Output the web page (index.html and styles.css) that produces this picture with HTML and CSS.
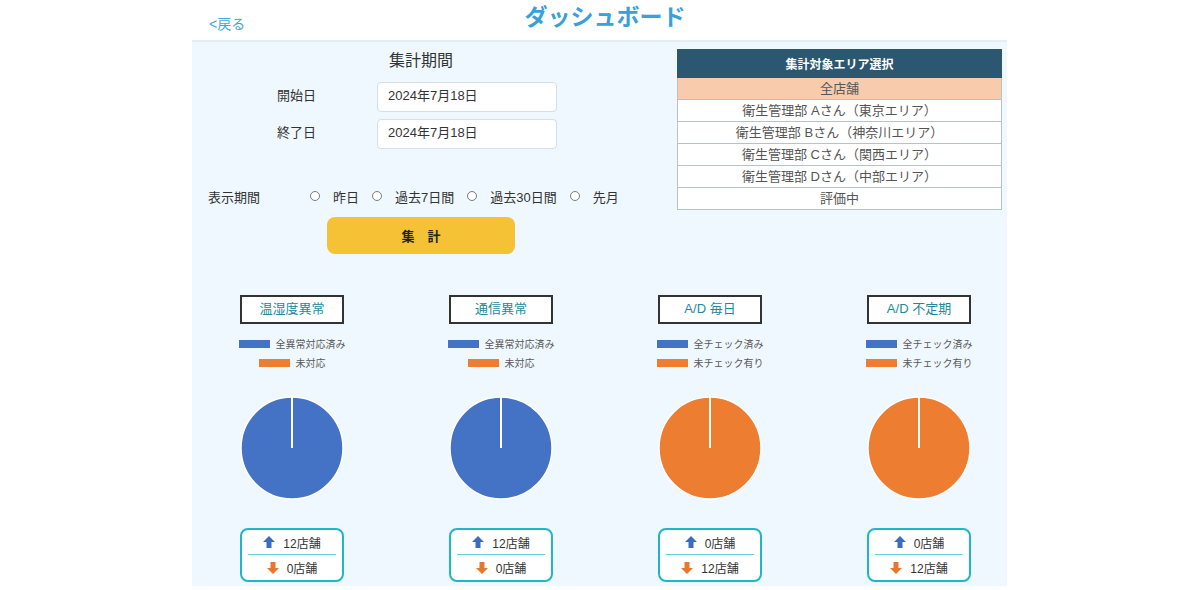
FILE: index.html
```html
<!DOCTYPE html>
<html lang="ja">
<head>
<meta charset="utf-8">
<title>ダッシュボード</title>
<link rel="stylesheet" href="styles.css">
</head>
<body>
<div class="page">
  <header class="header">
    <a class="back" href="#">&lt;戻る</a>
    <h1 class="title">ダッシュボード</h1>
    <span></span>
  </header>
  <main class="panel">
    <section class="top">
      <div class="period">
        <h2 class="period-title">集計期間</h2>
        <div class="date-row"><span class="date-label">開始日</span><div class="date-input">2024年7月18日</div></div>
        <div class="date-row second"><span class="date-label">終了日</span><div class="date-input">2024年7月18日</div></div>
        <div class="range-row">
          <span class="range-label">表示期間</span>
          <div class="radios">
            <span class="radio"></span><span class="radio-text">昨日</span>
            <span class="radio"></span><span class="radio-text">過去7日間</span>
            <span class="radio"></span><span class="radio-text">過去30日間</span>
            <span class="radio"></span><span class="radio-text">先月</span>
          </div>
        </div>
        <button class="sum-btn">集　計</button>
      </div>
      <table class="area">
        <tr><th>集計対象エリア選択</th></tr>
        <tr><td class="selected">全店舗</td></tr>
        <tr><td>衛生管理部 Aさん（東京エリア）</td></tr>
        <tr><td>衛生管理部 Bさん（神奈川エリア）</td></tr>
        <tr><td>衛生管理部 Cさん（関西エリア）</td></tr>
        <tr><td>衛生管理部 Dさん（中部エリア）</td></tr>
        <tr><td>評価中</td></tr>
      </table>
    </section>

    <section class="charts">
      <div class="chart">
        <div class="chart-title">温湿度異常</div>
        <div class="legend">
          <div class="legend-row"><span class="bar blue"></span><span>全異常対応済み</span></div>
          <div class="legend-row"><span class="bar orange"></span><span>未対応</span></div>
        </div>
        <svg class="pie" width="104" height="104" viewBox="0 0 104 104"><circle cx="52" cy="52" r="51" fill="#4472c4" stroke="#fff" stroke-width="1.5"/><line x1="52" y1="1" x2="52" y2="52" stroke="#fff" stroke-width="2"/></svg>
        <div class="count">
          <div class="count-row"><svg width="12" height="12" viewBox="0 0 12 12"><polygon points="6,0 12,6 8.5,6 8.5,12 3.5,12 3.5,6 0,6" fill="#3a6cc2"/></svg><span>12店舗</span></div>
          <div class="divider"></div>
          <div class="count-row"><svg width="12" height="12" viewBox="0 0 12 12"><polygon points="6,12 12,6 8.5,6 8.5,0 3.5,0 3.5,6 0,6" fill="#e8772e"/></svg><span>0店舗</span></div>
        </div>
      </div>
      <div class="chart">
        <div class="chart-title">通信異常</div>
        <div class="legend">
          <div class="legend-row"><span class="bar blue"></span><span>全異常対応済み</span></div>
          <div class="legend-row"><span class="bar orange"></span><span>未対応</span></div>
        </div>
        <svg class="pie" width="104" height="104" viewBox="0 0 104 104"><circle cx="52" cy="52" r="51" fill="#4472c4" stroke="#fff" stroke-width="1.5"/><line x1="52" y1="1" x2="52" y2="52" stroke="#fff" stroke-width="2"/></svg>
        <div class="count">
          <div class="count-row"><svg width="12" height="12" viewBox="0 0 12 12"><polygon points="6,0 12,6 8.5,6 8.5,12 3.5,12 3.5,6 0,6" fill="#3a6cc2"/></svg><span>12店舗</span></div>
          <div class="divider"></div>
          <div class="count-row"><svg width="12" height="12" viewBox="0 0 12 12"><polygon points="6,12 12,6 8.5,6 8.5,0 3.5,0 3.5,6 0,6" fill="#e8772e"/></svg><span>0店舗</span></div>
        </div>
      </div>
      <div class="chart">
        <div class="chart-title">A/D 毎日</div>
        <div class="legend">
          <div class="legend-row"><span class="bar blue"></span><span>全チェック済み</span></div>
          <div class="legend-row"><span class="bar orange"></span><span>未チェック有り</span></div>
        </div>
        <svg class="pie" width="104" height="104" viewBox="0 0 104 104"><circle cx="52" cy="52" r="51" fill="#ed7d31" stroke="#fff" stroke-width="1.5"/><line x1="52" y1="1" x2="52" y2="52" stroke="#fff" stroke-width="2"/></svg>
        <div class="count">
          <div class="count-row"><svg width="12" height="12" viewBox="0 0 12 12"><polygon points="6,0 12,6 8.5,6 8.5,12 3.5,12 3.5,6 0,6" fill="#3a6cc2"/></svg><span>0店舗</span></div>
          <div class="divider"></div>
          <div class="count-row"><svg width="12" height="12" viewBox="0 0 12 12"><polygon points="6,12 12,6 8.5,6 8.5,0 3.5,0 3.5,6 0,6" fill="#e8772e"/></svg><span>12店舗</span></div>
        </div>
      </div>
      <div class="chart">
        <div class="chart-title">A/D 不定期</div>
        <div class="legend">
          <div class="legend-row"><span class="bar blue"></span><span>全チェック済み</span></div>
          <div class="legend-row"><span class="bar orange"></span><span>未チェック有り</span></div>
        </div>
        <svg class="pie" width="104" height="104" viewBox="0 0 104 104"><circle cx="52" cy="52" r="51" fill="#ed7d31" stroke="#fff" stroke-width="1.5"/><line x1="52" y1="1" x2="52" y2="52" stroke="#fff" stroke-width="2"/></svg>
        <div class="count">
          <div class="count-row"><svg width="12" height="12" viewBox="0 0 12 12"><polygon points="6,0 12,6 8.5,6 8.5,12 3.5,12 3.5,6 0,6" fill="#3a6cc2"/></svg><span>0店舗</span></div>
          <div class="divider"></div>
          <div class="count-row"><svg width="12" height="12" viewBox="0 0 12 12"><polygon points="6,12 12,6 8.5,6 8.5,0 3.5,0 3.5,6 0,6" fill="#e8772e"/></svg><span>12店舗</span></div>
        </div>
      </div>
    </section>
  </main>
</div>
</body>
</html>
```

FILE: styles.css
```css
* { box-sizing: border-box; }
html, body {
  margin: 0;
  padding: 0;
  background: #ffffff;
  font-family: "Liberation Sans", "Noto Sans CJK JP", sans-serif;
  color: #333333;
}
.page {
  width: 815px;
  margin-left: 192px;
}
.header {
  height: 40px;
  display: grid;
  grid-template-columns: 1fr auto 1fr;
}
.back {
  padding-left: 17px;
  padding-top: 15px;
  font-size: 14px;
  line-height: 18px;
  color: #47a5dc;
  text-decoration: none;
}
.title {
  margin: 0;
  padding-left: 11px;
  padding-top: 3px;
  font-size: 23px;
  line-height: 28px;
  font-weight: bold;
  color: #3b9fd8;
}
.panel {
  background: #eff8fe;
  border-top: 2px solid #e2edf4;
  padding: 7px 0 4px 0;
}
.top {
  display: flex;
  align-items: flex-start;
  padding-left: 16px;
}
.period {
  width: 426px;
  flex-shrink: 0;
  display: flex;
  flex-direction: column;
}
.period-title {
  margin: 0;
  text-align: center;
  font-size: 16px;
  font-weight: normal;
  line-height: 24px;
  color: #333;
}
.date-row {
  display: flex;
  align-items: center;
  margin-top: 9px;
  padding-left: 69px;
  height: 30px;
}
.date-row.second { margin-top: 7px; }
.date-label {
  width: 100px;
  font-size: 13px;
  line-height: 16px;
  padding-bottom: 3px;
  color: #333;
}
.date-input {
  width: 180px;
  height: 30px;
  background: #fff;
  border: 1px solid #d3e0e8;
  border-radius: 4px;
  padding-left: 10px;
  font-size: 13px;
  line-height: 26px;
  color: #333;
}
.range-row {
  display: flex;
  align-items: center;
  margin-top: 37px;
  height: 20px;
  font-size: 13px;
  white-space: nowrap;
}
.range-label {
  width: 102px;
  flex-shrink: 0;
}
.radios {
  display: flex;
  align-items: center;
  flex-shrink: 0;
}
.radio {
  width: 10px;
  height: 10px;
  flex-shrink: 0;
  border: 1px solid #7a7a7a;
  border-radius: 50%;
  background: #fff;
}
.radio-text {
  flex-shrink: 0;
  padding-left: 13px;
  padding-right: 13px;
}
.sum-btn {
  align-self: center;
  margin-top: 11px;
  width: 188px;
  height: 37px;
  border: none;
  border-radius: 8px;
  background: #f5c236;
  font-family: inherit;
  font-size: 13px;
  font-weight: bold;
  color: #222;
}
.area {
  margin-left: 43px;
  width: 325px;
  border-collapse: collapse;
  background: #fff;
}
.area th {
  height: 28px;
  padding: 0;
  background: #2c5770;
  color: #fff;
  font-size: 12px;
  font-weight: bold;
  border: 1px solid #2c5770;
}
.area td {
  height: 22px;
  padding: 0;
  text-align: center;
  font-size: 13px;
  line-height: 20px;
  color: #555;
  border: 1px solid #b7c3cb;
}
.area td.selected { background: #f8cbad; }
.charts {
  margin-top: 41px;
  margin-left: 12px;
  display: grid;
  grid-template-columns: repeat(4, 176px);
  column-gap: 33px;
}
.chart {
  display: flex;
  flex-direction: column;
  align-items: center;
}
.chart-title {
  width: 104px;
  height: 29px;
  border: 2px solid #333;
  background: #fff;
  text-align: center;
  font-size: 13px;
  line-height: 24px;
  color: #23899a;
}
.legend {
  margin-top: 10px;
  display: flex;
  flex-direction: column;
  align-items: center;
}
.legend-row {
  height: 19px;
  display: flex;
  align-items: center;
  font-size: 10px;
  color: #595959;
}
.bar {
  width: 31px;
  height: 8px;
  margin-right: 6px;
}
.bar.blue { background: #4472c4; }
.bar.orange { background: #ed7d31; }
.pie {
  display: block;
  margin-top: 24px;
}
.count {
  margin-top: 28px;
  width: 104px;
  height: 54px;
  border: 2px solid #1fb6c7;
  border-radius: 8px;
  background: #fff;
}
.count-row {
  height: 24px;
  display: flex;
  align-items: center;
  justify-content: center;
  gap: 8px;
  font-size: 12px;
  color: #333;
}
.count-row:last-child { height: 25px; }
.divider {
  height: 1px;
  margin: 0 6px;
  background: #62d0de;
}
```
